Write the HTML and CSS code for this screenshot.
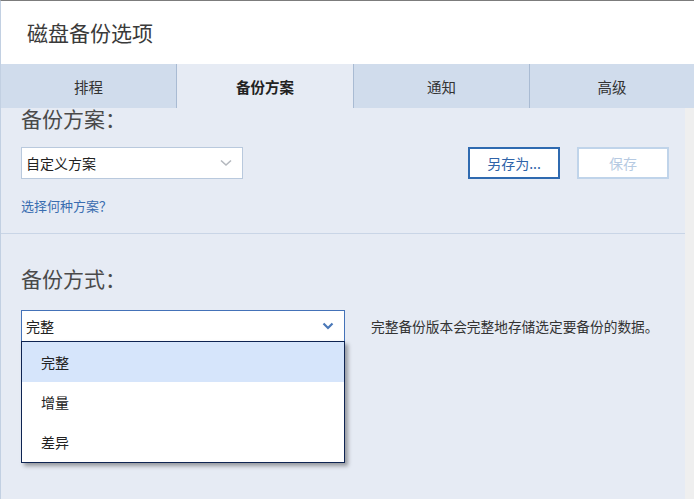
FILE: index.html
```html
<!DOCTYPE html>
<html lang="zh">
<head>
    <meta charset="UTF-8">
    <meta name="viewport" content="width=device-width, initial-scale=1.0">
    <title>磁盘备份选项</title>
    <link rel="stylesheet" href="styles.css">
</head>
<body>

    <div class="window">
        <div class="header">磁盘备份选项</div>

        <div class="tabs">
            <div class="tab">排程</div>
            <div class="tab active">备份方案</div>
            <div class="tab">通知</div>
            <div class="tab">高级</div>
        </div>

        <div class="body">
            <div class="content">
                <div class="section">
                    <h3 class="heading">备份方案：</h3>
                    <div class="row">
                        <div class="select plain">
                            <span>自定义方案</span>
                            <svg width="12" height="8" viewBox="0 0 12 8"><polyline points="1,1.5 6,6 11,1.5" fill="none" stroke="#b4b8be" stroke-width="1.6"/></svg>
                        </div>
                        <div class="buttons">
                            <button class="btn primary">另存为...</button>
                            <button class="btn disabled">保存</button>
                        </div>
                    </div>
                    <a class="link" href="#">选择何种方案？</a>
                </div>

                <div class="section second">
                    <h3 class="heading">备份方式：</h3>
                    <div class="row">
                        <div class="select open">
                            <span>完整</span>
                            <svg width="12" height="8" viewBox="0 0 12 8"><polyline points="1.5,1.5 6,6 10.5,1.5" fill="none" stroke="#4a78b8" stroke-width="2.2"/></svg>
                            <div class="dropdown">
                                <div class="option selected">完整</div>
                                <div class="option">增量</div>
                                <div class="option">差异</div>
                            </div>
                        </div>
                        <div class="desc">完整备份版本会完整地存储选定要备份的数据。</div>
                    </div>
                </div>
            </div>
            <div class="track"></div>
        </div>
    </div>

</body>
</html>
```

FILE: styles.css
```css
body {
    margin: 0;
    font-family: "Noto Sans CJK SC", "Noto Sans", sans-serif;
    color: #333;
    overflow: hidden;
}
.window {
    width: 693px;
    height: 498px;
    border-top: 1px solid #7c7c7c;
    border-left: 1px solid #c2d0e2;
    display: flex;
    flex-direction: column;
}
.header {
    height: 63px;
    line-height: 63px;
    padding-left: 26px;
    font-size: 21px;
    background: #fff;
    color: #3a3a3a;
}
.tabs {
    display: grid;
    grid-template-columns: 175px 177px 176px 1fr;
    height: 44px;
    background: #d0dcec;
}
.tab {
    display: flex;
    align-items: center;
    justify-content: center;
    font-size: 14.5px;
    color: #333;
    border-left: 1px solid #a9bbd3;
}
.tab:first-child {
    border-left: none;
}
.tab.active {
    background: #e6ebf4;
    font-weight: bold;
    color: #222;
}
.body {
    flex: 1;
    display: flex;
    background: #e6ebf4;
}
.content {
    flex: 1;
}
.track {
    width: 9px;
    background: #efefef;
}
.section {
    padding: 0 16px 19px 20px;
    border-bottom: 1px solid #c9d5e6;
}
.section.second {
    border-bottom: none;
    padding-top: 34px;
}
.heading {
    margin: 0;
    font-size: 21px;
    line-height: 21px;
    font-weight: normal;
    color: #4a4a4a;
}
.row {
    display: flex;
    align-items: center;
    margin-top: 18px;
}
.second .row {
    margin-top: 21px;
}
.select {
    position: relative;
    box-sizing: border-box;
    width: 222px;
    height: 32px;
    padding: 0 10px 0 4px;
    background: #fff;
    border: 1px solid #b9c9dd;
    display: flex;
    align-items: center;
    justify-content: space-between;
    font-size: 14px;
    color: #222;
}
.select.open {
    width: 324px;
    border-color: #4472b8;
}
.buttons {
    margin-left: auto;
    display: flex;
    gap: 17px;
}
.btn {
    box-sizing: border-box;
    width: 92px;
    height: 32px;
    background: #fff;
    font-family: inherit;
    font-size: 14px;
    padding: 0;
    cursor: pointer;
}
.btn.primary {
    border: 2px solid #2f6ab0;
    color: #2f63a8;
}
.btn.disabled {
    border: 2px solid #c0d4ea;
    color: #b6cae2;
}
.link {
    display: block;
    margin-top: 19px;
    font-size: 13px;
    line-height: 16px;
    color: #3a6db0;
    text-decoration: none;
}
.dropdown {
    position: absolute;
    left: -1px;
    top: 30px;
    width: 324px;
    box-sizing: border-box;
    background: #fff;
    border: 1px solid #0e2452;
    box-shadow: 3px 3px 4px rgba(0, 0, 0, 0.35);
}
.option {
    height: 40px;
    line-height: 40px;
    padding-left: 19px;
    font-size: 14px;
    color: #222;
}
.option.selected {
    background: #d6e5fb;
}
.desc {
    margin-left: 26px;
    font-size: 13.7px;
    color: #333;
}
```
